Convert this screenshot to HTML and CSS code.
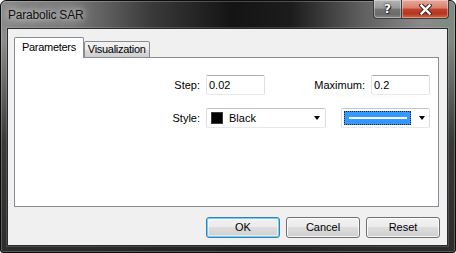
FILE: index.html
```html
<!DOCTYPE html>
<html lang="en">
<head>
    <meta charset="UTF-8">
    <title>Parabolic SAR</title>
    <link rel="stylesheet" href="styles.css">
</head>
<body>
    <div class="window">
        <div class="titlebar">
            <span class="title">Parabolic SAR</span>
            <div class="caption">
                <span class="cap-btn help">?</span>
                <span class="cap-btn close">
                    <svg width="13" height="11" viewBox="0 0 13 11">
                        <path d="M2.5 1.5 L10.5 9.5 M10.5 1.5 L2.5 9.5" stroke="#3a2a28" stroke-width="4.4" stroke-linecap="square"/>
                        <path d="M2.5 1.5 L10.5 9.5 M10.5 1.5 L2.5 9.5" stroke="#fff" stroke-width="2.4" stroke-linecap="square"/>
                    </svg>
                </span>
            </div>
        </div>
        <div class="client">
            <div class="tabs">
                <span class="tab active">Parameters</span>
                <span class="tab">Visualization</span>
            </div>
            <div class="panel">
                <div class="form">
                    <span class="lbl">Step:</span>
                    <span class="field col-a">0.02</span>
                    <span class="lbl col-bd">Maximum:</span>
                    <span class="field col-e">0.2</span>

                    <span class="lbl">Style:</span>
                    <div class="combo col-ab">
                        <span class="swatch"></span>
                        <span class="combo-text">Black</span>
                        <span class="arrow"></span>
                    </div>
                    <div class="combo col-de">
                        <span class="line-pick"><span class="line"></span></span>
                        <span class="arrow"></span>
                    </div>
                </div>
            </div>
            <div class="buttons">
                <span class="btn default">OK</span>
                <span class="btn">Cancel</span>
                <span class="btn">Reset</span>
            </div>
        </div>
    </div>
</body>
</html>
```

FILE: styles.css
```css
body {
    margin: 0;
    background: #fff;
    font-family: "Liberation Sans", Arial, sans-serif;
    font-size: 11px;
    color: #000;
}
.window {
    width: 456px;
    height: 253px;
    box-sizing: border-box;
    border: 1px solid #0c0c0c;
    border-radius: 6px 6px 3px 3px;
    padding: 0 7px 6px 6px;
    display: flex;
    flex-direction: column;
    background:
        linear-gradient(to bottom, rgba(0,0,0,0) 0, rgba(0,0,0,0) 40px, rgba(30,30,30,.75) 140px, rgba(36,36,36,.92) 100%),
        linear-gradient(to right, #8c8c8c 0, #7a7a7a 70px, #3a3a3a 150px, #141414 230px, #1c1c1c 290px, #5e5e5e 360px, #8a8a8a 420px, #7c8a80 456px);
    box-shadow: inset 0 0 0 1px rgba(255,255,255,.22);
}
.titlebar {
    height: 27px;
    display: flex;
    justify-content: space-between;
    align-items: flex-start;
    padding-left: 1px;
}
.title {
    font-size: 12px;
    line-height: 29px;
    color: #111;
    letter-spacing: -0.2px;
    text-shadow: 0 0 6px rgba(230,230,230,.9), 0 0 10px rgba(210,210,210,.8), 0 0 14px rgba(200,200,200,.6);
}
.caption {
    display: flex;
    margin: -1px -1px 0 0;
}
.cap-btn {
    height: 19px;
    box-sizing: border-box;
    border: 1px solid #3c3c3c;
    border-top: 0;
    display: flex;
    align-items: center;
    justify-content: center;
    box-shadow: inset 0 0 0 1px rgba(255,255,255,.35);
}
.help {
    width: 28px;
    border-right: 0;
    border-radius: 0 0 0 4px;
    background: linear-gradient(#b4b4b4 0, #999 45%, #747474 50%, #6a6a6a 80%, #8a8a8a 100%);
    color: #fff;
    font-family: "DejaVu Sans", sans-serif;
    font-weight: bold;
    font-size: 12px;
    text-shadow: 0 0 1px #222, 0 0 2px #222, 1px 1px 0 #333;
}
.close {
    width: 48px;
    border-radius: 0 0 4px 0;
    background: linear-gradient(#e6aa9d 0, #d7806d 45%, #c2442b 50%, #b43620 75%, #d46545 100%);
}
.client {
    flex: 1;
    border: 1px solid #2a2a2a;
    background: #f0f0f0;
    padding: 8px 7px 7px 6px;
    display: flex;
    flex-direction: column;
    box-shadow: 0 0 0 1px rgba(255,255,255,.15);
}
.tabs {
    display: flex;
    align-items: flex-end;
    height: 21px;
    margin-bottom: -1px;
    position: relative;
    z-index: 1;
}
.tab {
    box-sizing: border-box;
    height: 17px;
    border: 1px solid #898c95;
    padding: 0 3px;
    line-height: 15px;
    letter-spacing: -0.3px;
    background: linear-gradient(#f2f2f2 0, #ebebeb 50%, #dddddd 51%, #cfcfcf 100%);
    border-radius: 2px 2px 0 0;
}
.tab.active {
    height: 21px;
    border-bottom: 0;
    padding: 0 7px;
    line-height: 19px;
    background: #fff;
}
.panel {
    height: 150px;
    box-sizing: border-box;
    border: 1px solid #898c95;
    background: #fff;
    margin-right: 1px;
    padding: 17px 8px 0 0;
}
.form {
    display: grid;
    grid-template-columns: 1fr 59px 61px 15px 30px 59px;
    grid-template-rows: 20px 20px;
    row-gap: 13px;
}
.lbl {
    align-self: center;
    text-align: right;
    padding-right: 6px;
}
.col-a { grid-column: 2; }
.col-bd { grid-column: 3 / 6; }
.col-e { grid-column: 6; }
.col-ab { grid-column: 2 / 4; }
.col-de { grid-column: 5 / 7; }
.field {
    border: 1px solid;
    border-color: #abadb3 #dbdfe6 #e3e9ef #e2e3ea;
    border-radius: 2px;
    background: #fff;
    padding-left: 2px;
    line-height: 18px;
}
.combo {
    border: 1px solid;
    border-color: #c2c4ca #dbdfe6 #e3e9ef #dbdfe6;
    border-radius: 2px;
    background: #fff;
    display: flex;
    align-items: center;
    padding: 0 5px 0 4px;
}
.swatch {
    width: 12px;
    height: 12px;
    box-sizing: border-box;
    background: #000;
    border: 1px solid #3a3a3a;
}
.combo-text {
    margin-left: 6px;
}
.arrow {
    margin-left: auto;
    width: 0;
    height: 0;
    border-left: 3.5px solid transparent;
    border-right: 3.5px solid transparent;
    border-top: 4px solid #000;
}
.col-de {
    padding-left: 2px;
    padding-right: 4px;
}
.line-pick {
    width: 67px;
    height: 14px;
    box-sizing: border-box;
    border: 1px dotted #222;
    background: #3399ff;
    display: flex;
    align-items: center;
    padding: 0 3px 0 4px;
}
.line {
    flex: 1;
    height: 2px;
    background: #fff;
}
.buttons {
    display: flex;
    justify-content: flex-end;
    gap: 6px;
    margin-top: 10px;
}
.btn {
    width: 74px;
    height: 21px;
    box-sizing: border-box;
    border: 1px solid #707070;
    border-radius: 3px;
    background: linear-gradient(#f2f2f2 0, #ebebeb 49%, #dddddd 50%, #cfcfcf 100%);
    box-shadow: inset 0 0 0 1px rgba(255,255,255,.8);
    text-align: center;
    line-height: 19px;
}
.btn.default {
    border-color: #3c7fb1;
    box-shadow: inset 0 0 0 1px #6ed0f7, inset 0 0 0 2px rgba(255,255,255,.5);
}
```
